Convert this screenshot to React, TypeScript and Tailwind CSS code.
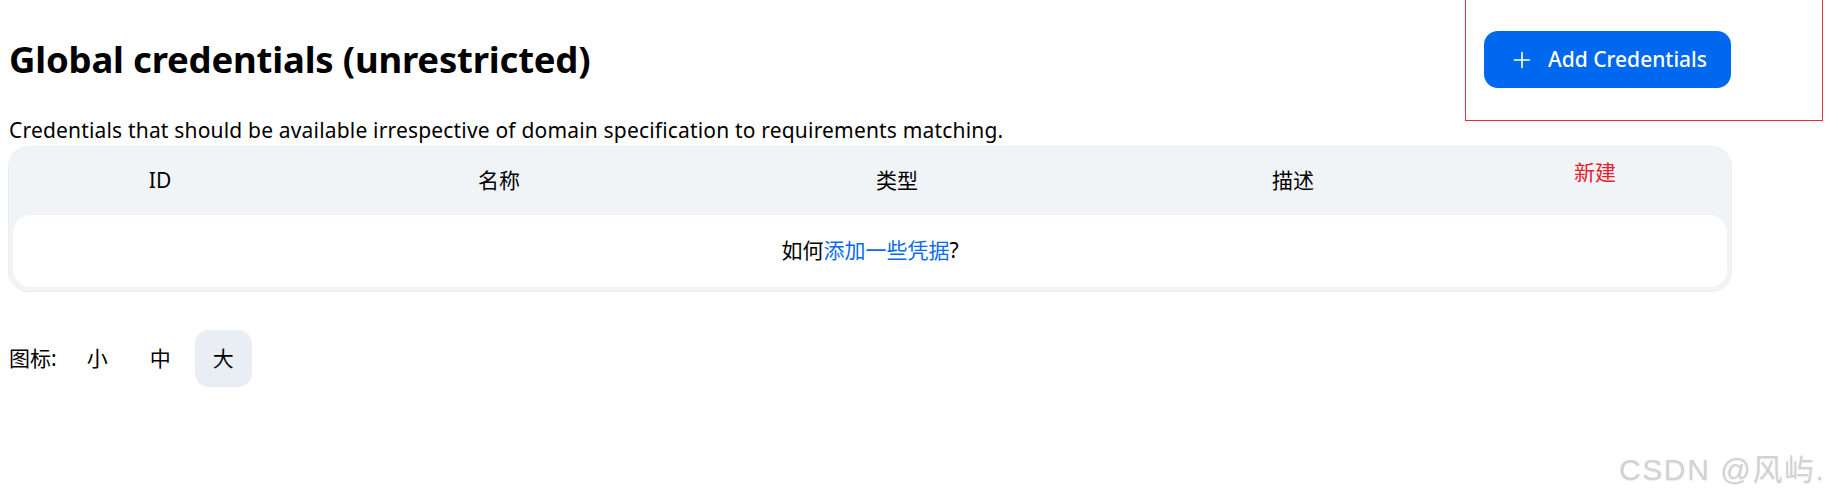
import React from "react";

function PlusIcon() {
  return (
    <svg width="18" height="18" viewBox="0 0 18 18" fill="none" stroke="currentColor" strokeWidth="1.6" strokeLinecap="round">
      <path d="M9 1.5v15M1.5 9h15" />
    </svg>
  );
}

export default function App() {
  return (
    <div className="relative min-h-[503px] w-full bg-white text-black [font-family:'Noto_Sans','Noto_Sans_CJK_SC',sans-serif]">
      <div className="ml-[9px] w-[1722px]">
        <div className="flex items-center justify-between pt-[31px]">
          <h1 className="text-[36.5px] font-bold leading-[57px] tracking-[-0.2px]">Global credentials (unrestricted)</h1>
          <button className="flex h-[57px] w-[247px] items-center gap-[17px] rounded-[14px] bg-[#0068ef] pl-[29px] text-[21px] font-medium text-white">
            <PlusIcon />
            <span>Add Credentials</span>
          </button>
        </div>
        <p className="mt-[28px] text-[21px] leading-[28px] tracking-[0.18px]">
          Credentials that should be available irrespective of domain specification to requirements matching.
        </p>
        <div className="mt-[3px] rounded-[20px] bg-[#f1f4f7] px-[4px] pb-[4px] shadow-[0_0_0_1px_#eaedf1]">
          <div className="grid h-[68px] grid-cols-[294px_384px_412px_380px_1fr] items-center text-[21px] [&>*]:text-center">
            <div>ID</div>
            <div>名称</div>
            <div>类型</div>
            <div>描述</div>
            <div className="self-start pt-[10px] pr-[20px] text-[#e8202e]">新建</div>
          </div>
          <div className="flex h-[72px] items-center justify-center rounded-[18px] bg-white text-[21px]">
            <span>
              如何<a className="text-[#0b6bf0]">添加一些凭据</a>?
            </span>
          </div>
        </div>
        <div className="mt-[39px] flex items-center text-[21px]">
          <span className="mr-[12px]">图标:</span>
          <div className="flex gap-[6px]">
            <div className="flex h-[57px] w-[57px] items-center justify-center rounded-[14px]">小</div>
            <div className="flex h-[57px] w-[57px] items-center justify-center rounded-[14px]">中</div>
            <div className="flex h-[57px] w-[57px] items-center justify-center rounded-[14px] bg-[#e9edf4]">大</div>
          </div>
        </div>
      </div>
      <div className="pointer-events-none absolute left-[1619px] top-[452px] text-[30px] leading-[36px] tracking-[1.6px] text-[#d2d2d2] [font-family:'Liberation_Sans','Noto_Sans_CJK_SC',sans-serif] [text-shadow:0_1px_1px_#ececec]">
        CSDN @风屿.
      </div>
      <div className="pointer-events-none absolute left-[1465px] top-[-2px] h-[123px] w-[358px] border border-[#d9323e]" />
    </div>
  );
}
